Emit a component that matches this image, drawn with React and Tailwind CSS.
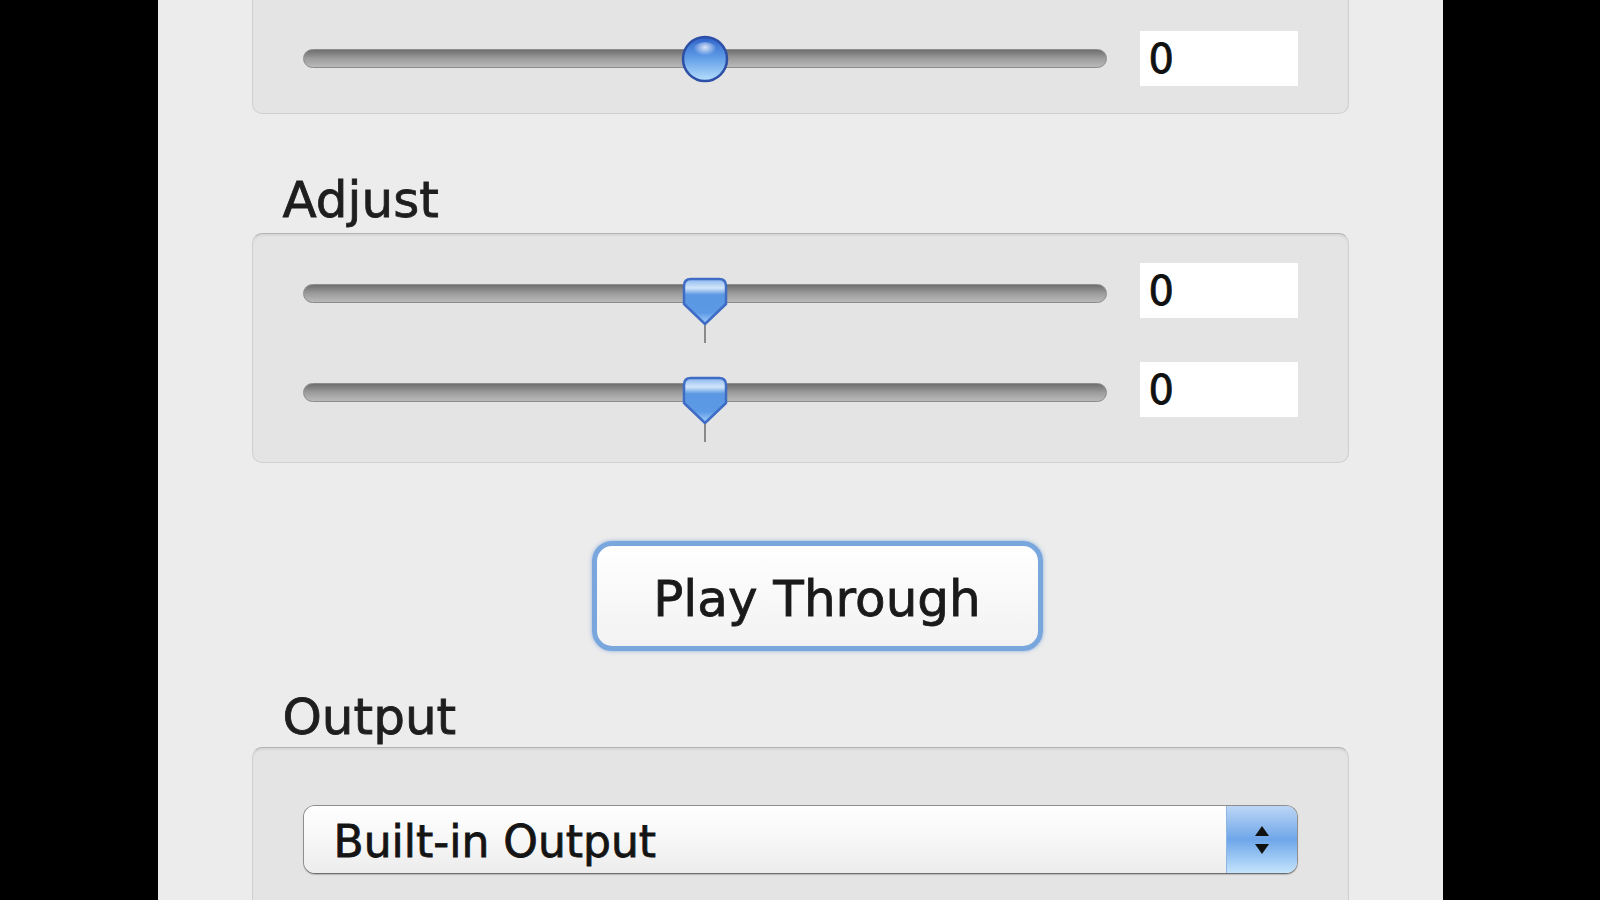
import React from 'react';

const font = { fontFamily: '"DejaVu Sans", "Liberation Sans", sans-serif' };

function RoundKnob() {
  return (
    <svg width="48" height="48" viewBox="0 0 48 48" className="absolute left-1/2 top-1/2 -translate-x-1/2 -translate-y-1/2">
      <defs>
        <linearGradient id="rk" x1="0" y1="0" x2="0" y2="1">
          <stop offset="0" stopColor="#2f63c9" />
          <stop offset="0.45" stopColor="#5d9ae6" />
          <stop offset="1" stopColor="#b8e0fd" />
        </linearGradient>
        <radialGradient id="rkh" cx="0.5" cy="0.3" r="0.45">
          <stop offset="0" stopColor="#ffffff" stopOpacity="0.8" />
          <stop offset="1" stopColor="#ffffff" stopOpacity="0" />
        </radialGradient>
      </defs>
      <circle cx="24" cy="24" r="22" fill="url(#rk)" stroke="#2d4fa6" strokeWidth="2.5" />
      <ellipse cx="24" cy="16" rx="13" ry="9" fill="url(#rkh)" />
    </svg>
  );
}

function PointerKnob() {
  return (
    <svg width="46" height="68" viewBox="0 0 46 68" className="absolute left-1/2 top-[-7px] -translate-x-1/2">
      <defs>
        <linearGradient id="pk" x1="0" y1="0" x2="0" y2="1">
          <stop offset="0" stopColor="#8ab6ee" />
          <stop offset="0.2" stopColor="#d3e6fb" />
          <stop offset="0.35" stopColor="#5b97e2" />
          <stop offset="0.75" stopColor="#5c9ae6" />
          <stop offset="1" stopColor="#a8d2fb" />
        </linearGradient>
      </defs>
      <rect x="22" y="46" width="2" height="20" fill="#8a8a8a" />
      <path d="M9 2 H37 Q44 2 44 9 V27 L23 47 L2 27 V9 Q2 2 9 2 Z" fill="url(#pk)" stroke="#3f6cc4" strokeWidth="2.5" strokeLinejoin="round" />
    </svg>
  );
}

function SliderRow({ pointer }) {
  return (
    <div className="flex items-center pl-[50px] pr-[50px]">
      <div className={`relative flex-1 h-[19px] ${pointer ? 'mt-[6px]' : ''}`}>
        <div className="h-full rounded-full bg-gradient-to-b from-[#6f6f6f] via-[#9c9c9c] to-[#b9b9b9] border border-[#8c8c8c]" />
        {pointer ? <PointerKnob /> : <RoundKnob />}
      </div>
      <div className="ml-[33px] w-[158px] h-[55px] bg-white flex items-center pl-[9px] text-[40px] leading-none text-[#111] [-webkit-text-stroke:0.8px_#111]" style={font}>
        0
      </div>
    </div>
  );
}

function GroupBox({ className = '', children }) {
  return (
    <div className={`rounded-[10px] bg-[#e4e4e4] border border-[#d0d0d0] border-t-[#b3b3b3] shadow-[inset_0_2px_2px_rgba(0,0,0,0.06)] ${className}`}>
      {children}
    </div>
  );
}

function Label({ children, className = '' }) {
  return (
    <div className={`pl-[31px] text-[50px] leading-none text-[#1e1e1e] [-webkit-text-stroke:0.8px_#1e1e1e] ${className}`} style={font}>
      {children}
    </div>
  );
}

export default function App() {
  return (
    <div className="w-full h-[900px] bg-black flex justify-center overflow-hidden">
      <div className="w-[1285px] h-full bg-[#ececec] px-[94px] flex flex-col">
        <GroupBox className="mt-[-40px] pt-[70px] pb-[27px]">
          <SliderRow />
        </GroupBox>

        <Label className="mt-[61px]">Adjust</Label>

        <GroupBox className="mt-[8px] pt-[29px] pb-[45px] flex flex-col gap-[44px]">
          <SliderRow pointer />
          <SliderRow pointer />
        </GroupBox>

        <div className="mt-[78px] flex justify-center pl-[34px]">
          <button
            type="button"
            className="w-[451px] h-[110px] pt-[6px] rounded-[20px] border-[5px] border-[#78a6dd] bg-gradient-to-b from-[#ffffff] to-[#f2f2f2] shadow-[0_0_4px_rgba(90,140,210,0.6)] text-[50px] leading-none text-[#1a1a1a] [-webkit-text-stroke:0.8px_#1a1a1a]"
            style={font}
          >
            Play Through
          </button>
        </div>

        <Label className="mt-[41px]">Output</Label>

        <GroupBox className="mt-[5px] pt-[57px] pb-[60px] px-[50px]">
          <div className="flex h-[69px] rounded-[12px] border border-[#8f8f8f] border-b-[#6f6f6f] overflow-hidden shadow-[0_1px_1px_rgba(0,0,0,0.2)]">
            <div className="flex-1 flex items-center pl-[30px] pt-[4px] bg-gradient-to-b from-[#ffffff] via-[#f7f7f7] to-[#ececec] text-[44px] leading-none text-[#141414] [-webkit-text-stroke:0.8px_#141414]" style={font}>
              Built-in Output
            </div>
            <div className="w-[71px] flex flex-col items-center justify-center gap-[8px] bg-gradient-to-b from-[#bcd6f5] via-[#6ea6e9] to-[#c4e4fc] border-l border-[#8fb5e4]">
              <svg width="14" height="10" viewBox="0 0 14 10"><path d="M7 0 L14 10 H0 Z" fill="#111" /></svg>
              <svg width="14" height="10" viewBox="0 0 14 10"><path d="M0 0 H14 L7 10 Z" fill="#111" /></svg>
            </div>
          </div>
        </GroupBox>
      </div>
    </div>
  );
}
